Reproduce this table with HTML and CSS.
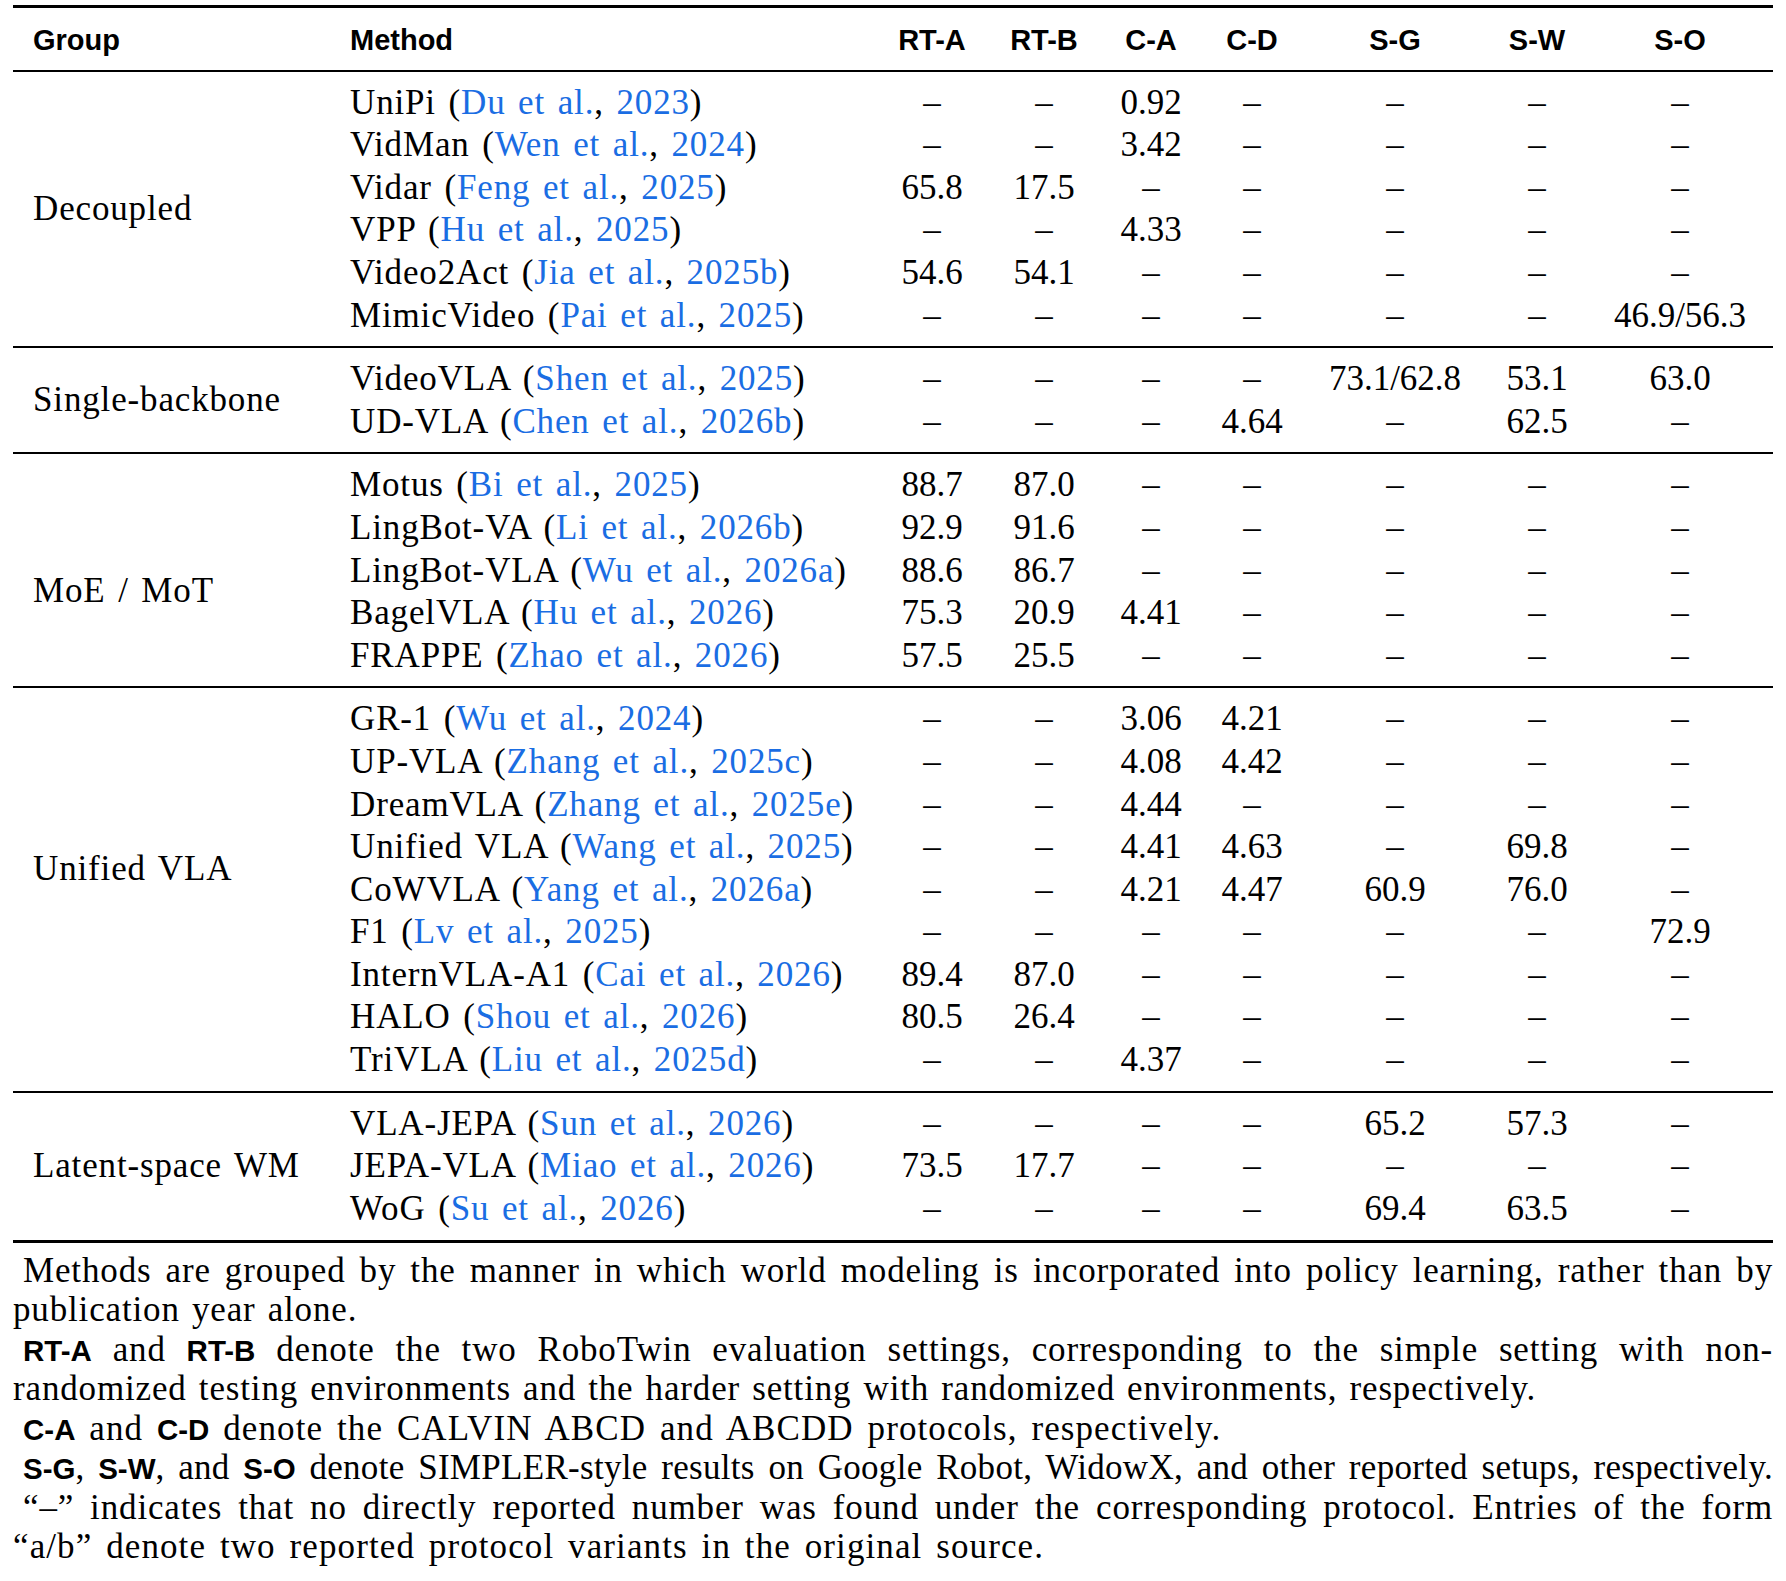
FILE: index.html
```html
<!DOCTYPE html>
<html lang="en">
<head>
    <meta charset="UTF-8">
    <meta name="viewport" content="width=device-width, initial-scale=1.0">
    <title>World modeling in policy learning</title>
    <link rel="stylesheet" href="styles.css">
</head>
<body>

    <div class="page">
        <!-- Tabuľka výsledkov -->
        <table class="results" id="results">
            <colgroup>
                <col class="col-group">
                <col class="col-method">
                <col class="col-rta">
                <col class="col-rtb">
                <col class="col-ca">
                <col class="col-cd">
                <col class="col-sg">
                <col class="col-sw">
                <col class="col-so">
            </colgroup>
            <thead>
                <tr>
                    <th class="left first">Group</th>
                    <th class="left">Method</th>
                    <th>RT-A</th>
                    <th>RT-B</th>
                    <th>C-A</th>
                    <th>C-D</th>
                    <th>S-G</th>
                    <th>S-W</th>
                    <th>S-O</th>
                </tr>
            </thead>
            <!-- Riadky sa doplnia cez JavaScript -->
        </table>

        <!-- Poznámky pod tabuľkou -->
        <div class="notes">
            <p class="note">
                <span class="line full indent">Methods are grouped by the manner in which world modeling is incorporated into policy learning, rather than by</span>
                <span class="line">publication year alone.</span>
            </p>
            <p class="note">
                <span class="line full indent"><b class="sf">RT-A</b> and <b class="sf">RT-B</b> denote the two RoboTwin evaluation settings, corresponding to the simple setting with non-</span>
                <span class="line">randomized testing environments and the harder setting with randomized environments, respectively.</span>
            </p>
            <p class="note">
                <span class="line indent wide"><b class="sf">C-A</b> and <b class="sf">C-D</b> denote the CALVIN ABCD and ABCDD protocols, respectively.</span>
            </p>
            <p class="note">
                <span class="line full indent tight"><b class="sf">S-G</b>, <b class="sf">S-W</b>, and <b class="sf">S-O</b> denote SIMPLER-style results on Google Robot, WidowX, and other reported setups, respectively.</span>
            </p>
            <p class="note">
                <span class="line full indent">“–” indicates that no directly reported number was found under the corresponding protocol. Entries of the form</span>
                <span class="line wide">“a/b” denote two reported protocol variants in the original source.</span>
            </p>
        </div>
    </div>

    <script>
        // '-' = nie je uvedené
        const groups = [
            { name: 'Decoupled', rows: [
                ['UniPi', 'Du et al.', '2023', '-', '-', '0.92', '-', '-', '-', '-'],
                ['VidMan', 'Wen et al.', '2024', '-', '-', '3.42', '-', '-', '-', '-'],
                ['Vidar', 'Feng et al.', '2025', '65.8', '17.5', '-', '-', '-', '-', '-'],
                ['VPP', 'Hu et al.', '2025', '-', '-', '4.33', '-', '-', '-', '-'],
                ['Video2Act', 'Jia et al.', '2025b', '54.6', '54.1', '-', '-', '-', '-', '-'],
                ['MimicVideo', 'Pai et al.', '2025', '-', '-', '-', '-', '-', '-', '46.9/56.3']
            ]},
            { name: 'Single-backbone', rows: [
                ['VideoVLA', 'Shen et al.', '2025', '-', '-', '-', '-', '73.1/62.8', '53.1', '63.0'],
                ['UD-VLA', 'Chen et al.', '2026b', '-', '-', '-', '4.64', '-', '62.5', '-']
            ]},
            { name: 'MoE / MoT', shift: 'low', rows: [
                ['Motus', 'Bi et al.', '2025', '88.7', '87.0', '-', '-', '-', '-', '-'],
                ['LingBot-VA', 'Li et al.', '2026b', '92.9', '91.6', '-', '-', '-', '-', '-'],
                ['LingBot-VLA', 'Wu et al.', '2026a', '88.6', '86.7', '-', '-', '-', '-', '-'],
                ['BagelVLA', 'Hu et al.', '2026', '75.3', '20.9', '4.41', '-', '-', '-', '-'],
                ['FRAPPE', 'Zhao et al.', '2026', '57.5', '25.5', '-', '-', '-', '-', '-']
            ]},
            { name: 'Unified VLA', shift: 'high', rows: [
                ['GR-1', 'Wu et al.', '2024', '-', '-', '3.06', '4.21', '-', '-', '-'],
                ['UP-VLA', 'Zhang et al.', '2025c', '-', '-', '4.08', '4.42', '-', '-', '-'],
                ['DreamVLA', 'Zhang et al.', '2025e', '-', '-', '4.44', '-', '-', '-', '-'],
                ['Unified VLA', 'Wang et al.', '2025', '-', '-', '4.41', '4.63', '-', '69.8', '-'],
                ['CoWVLA', 'Yang et al.', '2026a', '-', '-', '4.21', '4.47', '60.9', '76.0', '-'],
                ['F1', 'Lv et al.', '2025', '-', '-', '-', '-', '-', '-', '72.9'],
                ['InternVLA-A1', 'Cai et al.', '2026', '89.4', '87.0', '-', '-', '-', '-', '-'],
                ['HALO', 'Shou et al.', '2026', '80.5', '26.4', '-', '-', '-', '-', '-'],
                ['TriVLA', 'Liu et al.', '2025d', '-', '-', '4.37', '-', '-', '-', '-']
            ]},
            { name: 'Latent-space WM', rows: [
                ['VLA-JEPA', 'Sun et al.', '2026', '-', '-', '-', '-', '65.2', '57.3', '-'],
                ['JEPA-VLA', 'Miao et al.', '2026', '73.5', '17.7', '-', '-', '-', '-', '-'],
                ['WoG', 'Su et al.', '2026', '-', '-', '-', '-', '69.4', '63.5', '-']
            ]}
        ];

        function renderTable() {
            const table = document.getElementById('results');
            groups.forEach(group => {
                const body = document.createElement('tbody');
                group.rows.forEach((row, index) => {
                    const [method, authors, year, ...values] = row;
                    let html = '';
                    if (index === 0) {
                        const cls = group.shift ? `group ${group.shift}` : 'group';
                        html += `<td class="${cls}" rowspan="${group.rows.length}">${group.name}</td>`;
                    }
                    html += `<td class="method">${method} (<span class="cite">${authors}</span>, <span class="cite">${year}</span>)</td>`;
                    values.forEach(value => {
                        html += `<td class="num">${value === '-' ? '–' : value}</td>`;
                    });
                    const tr = document.createElement('tr');
                    tr.innerHTML = html;
                    body.appendChild(tr);
                });
                table.appendChild(body);
            });
        }

        renderTable();
    </script>
</body>
</html>
```

FILE: styles.css
```css
body {
    margin: 0;
    background-color: #fff;
    color: #000;
    font-family: "Liberation Serif", "Times New Roman", serif;
    font-size: 35px;
}

.page {
    width: 1760px;
    margin: 5px 0 0 13px;
}

/* Tabuľka */
.results {
    width: 100%;
    table-layout: fixed;
    border-collapse: separate;
    border-spacing: 0;
}

.col-group { width: 317px; }
.col-method { width: 547px; }
.col-rta { width: 110px; }
.col-rtb { width: 114px; }
.col-ca { width: 100px; }
.col-cd { width: 102px; }
.col-sg { width: 184px; }
.col-sw { width: 100px; }
.col-so { width: 186px; }

.results th {
    font-family: "Liberation Sans", Arial, sans-serif;
    font-weight: bold;
    font-size: 29px;
    line-height: 42.6px;
    padding: 11px 0 8px;
    text-align: center;
    border-top: 3px solid #000;
    border-bottom: 2px solid #000;
}

.results th.left {
    text-align: left;
    padding-left: 20px;
}

.results td {
    line-height: 42.6px;
    padding: 0;
    white-space: nowrap;
}

.results tr:first-child td {
    padding-top: 10px;
}

.results tr:last-child td,
.results td.group {
    padding-bottom: 9px;
    border-bottom: 2px solid #000;
}

.results tbody:last-child tr:last-child td,
.results tbody:last-child td.group {
    padding-bottom: 9.5px;
    border-bottom-width: 3px;
}

.results td.group {
    padding-left: 20px;
    vertical-align: middle;
    letter-spacing: 0.85px;
    word-spacing: 3px;
}

/* multirow v origináli nie je presne v strede skupiny */
.results tr td.group.low {
    padding-top: 50px;
}

.results tr td.group.high {
    padding-bottom: 51px;
}

.results td.method {
    padding-left: 20px;
    letter-spacing: 0.85px;
    word-spacing: 3px;
}

.results td.num {
    text-align: center;
}

.cite {
    color: #1a6de3;
}

/* Poznámky */
.notes {
    margin-top: 8px;
}

.note {
    margin: 0;
    line-height: 39.5px;
    letter-spacing: 0.85px;
    word-spacing: 2.5px;
}

.note .line {
    display: block;
    white-space: nowrap;
}

.note .indent {
    text-indent: 10px;
}

.note .full {
    text-align: justify;
    text-align-last: justify;
}

.note .tight {
    letter-spacing: 0.3px;
    word-spacing: 0;
}

.note .wide {
    letter-spacing: 1.1px;
    word-spacing: 4px;
}

.sf {
    font-family: "Liberation Sans", Arial, sans-serif;
    font-weight: bold;
    font-size: 29.5px;
    line-height: 1;
    letter-spacing: 0;
    word-spacing: 0;
}
```
